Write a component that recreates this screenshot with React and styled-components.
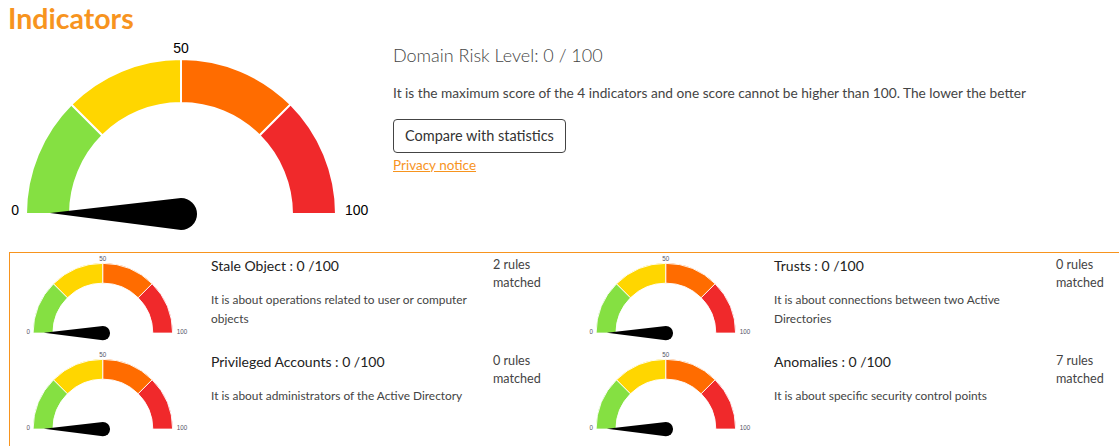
import styled, { createGlobalStyle } from "styled-components"

const GlobalStyle = createGlobalStyle`
  html, body {
    margin: 0;
    overflow: hidden;
    background: #fff;
  }
  body {
    font-family: Lato, "Open Sans", "Liberation Sans", sans-serif;
    color: #333;
  }
`

const ORANGE = "#f7941e"

const Page = styled.div`
  padding-left: 8px;
`

const Title = styled.h1`
  margin: 0;
  font-size: 28.5px;
  line-height: 36px;
  font-weight: 700;
  color: ${ORANGE};
`

const Overview = styled.div`
  display: flex;
  gap: 21px;
`

const OverviewText = styled.div`
  padding-top: 8px;
`

const RiskLevel = styled.h2`
  margin: 0;
  font-size: 18px;
  line-height: 22px;
  font-weight: 300;
  color: #444;
`

const Lead = styled.p`
  margin: 18px 0 0;
  font-size: 13.7px;
  line-height: 18px;
  color: #444;
`

const Button = styled.button`
  display: block;
  margin-top: 17px;
  padding: 6px 11px;
  font-family: inherit;
  font-size: 14.5px;
  line-height: 20px;
  color: #333;
  background: #fff;
  border: 1px solid #444;
  border-radius: 4px;
  cursor: pointer;
`

const Notice = styled.a`
  display: inline-block;
  margin-top: 3px;
  font-size: 13.5px;
  line-height: 18px;
  color: ${ORANGE};
  text-decoration: underline;
`

const Box = styled.div`
  margin: 16px 0 0 1px;
  padding-bottom: 24px;
  width: 1126px;
  border: 1px solid ${ORANGE};
  display: grid;
  grid-template-columns: repeat(2, 563px);
  row-gap: 6px;
`

const Card = styled.div`
  display: grid;
  grid-template-columns: 189px 270px 80px;
  column-gap: 12px;
  align-items: start;
`

const GaugeCell = styled.div`
  padding-left: 15px;
  line-height: 0;
`

const CardTitle = styled.div`
  margin-top: 3px;
  font-size: 14px;
  line-height: 20px;
  color: #222;
`

const CardDesc = styled.div`
  margin-top: 14px;
  font-size: 11.9px;
  line-height: 19px;
  color: #444;
`

const Rules = styled.div`
  margin-top: 3px;
  font-size: 12.6px;
  line-height: 18px;
  color: #444;
`

const COLORS = ["#85e042", "#ffd600", "#ff6c00", "#f0292b"]
const CX = 173
const CY = 178
const R = 155
const r = 111

const pt = (rad, deg) => {
  const a = (deg * Math.PI) / 180
  return `${(CX + rad * Math.cos(a)).toFixed(2)} ${(CY - rad * Math.sin(a)).toFixed(2)}`
}

const segment = (a1, a2) =>
  `M ${pt(R, a1)} A ${R} ${R} 0 0 1 ${pt(R, a2)} L ${pt(r, a2)} A ${r} ${r} 0 0 0 ${pt(r, a1)} Z`

const Gauge = ({ scale = 1, value = 0, labelColor = "#000" }) => {
  const angle = (value / 100) * 180
  return (
    <svg width={364 * scale} height={200 * scale} viewBox="0 0 364 200">
      {COLORS.map((c, i) => (
        <path key={c} d={segment(180 - i * 45, 135 - i * 45)} fill={c} stroke="#fff" strokeWidth="2" />
      ))}
      <g transform={`rotate(${angle} ${CX} ${CY})`}>
        <path d={`M ${CX - 131} ${CY - 1} L ${CX} ${CY - 16} A 16 16 0 1 1 ${CX} ${CY + 16} Z`} fill="#000" />
      </g>
      <g fontFamily="'Liberation Sans', Arial, sans-serif" fontSize="14" fill={labelColor}>
        <text x="11" y="179" textAnchor="end">0</text>
        <text x={CX} y="17" textAnchor="middle">50</text>
        <text x="337" y="179">100</text>
      </g>
    </svg>
  )
}

const indicators = [
  { name: "Stale Object", desc: "It is about operations related to user or computer objects", rules: 2 },
  { name: "Trusts", desc: "It is about connections between two Active Directories", rules: 0 },
  { name: "Privileged Accounts", desc: "It is about administrators of the Active Directory", rules: 0 },
  { name: "Anomalies", desc: "It is about specific security control points", rules: 7 },
]

const App = () => {
  return (
    <Page>
      <GlobalStyle />
      <Title>Indicators</Title>
      <Overview>
        <Gauge value={0} />
        <OverviewText>
          <RiskLevel>Domain Risk Level: 0 / 100</RiskLevel>
          <Lead>It is the maximum score of the 4 indicators and one score cannot be higher than 100. The lower the better</Lead>
          <Button>Compare with statistics</Button>
          <Notice href="#privacy">Privacy notice</Notice>
        </OverviewText>
      </Overview>
      <Box>
        {indicators.map((item) => (
          <Card key={item.name}>
            <GaugeCell>
              <Gauge scale={0.45} value={0} labelColor="#556" />
            </GaugeCell>
            <div>
              <CardTitle>{item.name} : 0 /100</CardTitle>
              <CardDesc>{item.desc}</CardDesc>
            </div>
            <Rules>{item.rules} rules matched</Rules>
          </Card>
        ))}
      </Box>
    </Page>
  )
}

export default App
